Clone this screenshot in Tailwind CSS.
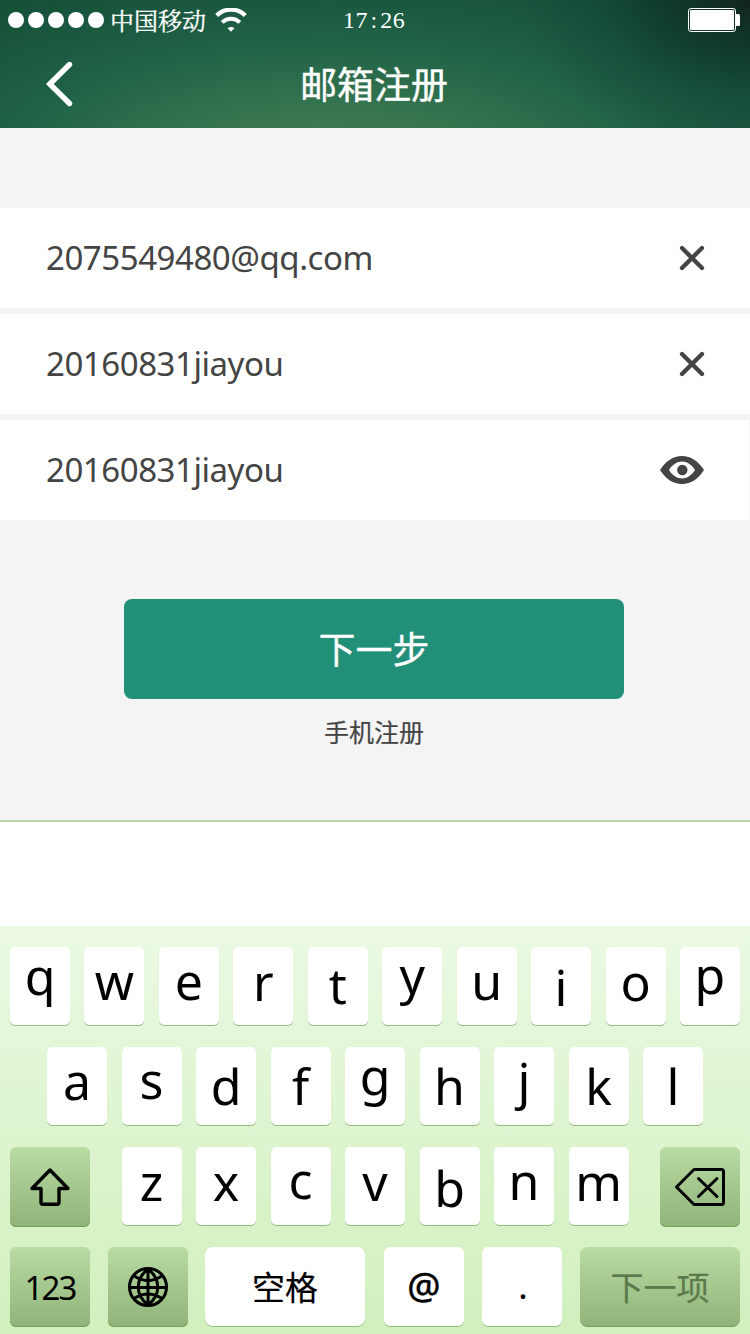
<!DOCTYPE html>
<html lang="zh-CN">
<head>
<meta charset="utf-8">
<title>邮箱注册</title>
<script src="https://cdn.jsdelivr.net/npm/@tailwindcss/browser@4"></script>
</head>
<body class="w-[750px] h-[1334px] overflow-hidden flex flex-col bg-[#f4f4f4] font-['Noto_Sans','Noto_Sans_CJK_SC',sans-serif]">

<header class="h-32 shrink-0 flex flex-col text-white bg-[radial-gradient(ellipse_230px_150px_at_750px_0px,#11251f_0%,#0d3127b0_35%,#0e3a2c50_65%,#0f3f2f00_100%),radial-gradient(ellipse_540px_205px_at_330px_165px,#44805a_0%,#34744f_30%,#1f6146_62%,#154f38_100%)]">
  <div class="h-10 grid grid-cols-[343px_1fr_auto] items-center pl-2 pr-[10px]">
    <div class="flex items-center">
      <div class="flex gap-1">
        <i class="size-4 rounded-full bg-white"></i><i class="size-4 rounded-full bg-white"></i><i class="size-4 rounded-full bg-white"></i><i class="size-4 rounded-full bg-white"></i><i class="size-4 rounded-full bg-white"></i>
      </div>
      <span class="ml-[6px] w-24 text-[24px] leading-[40px] whitespace-nowrap font-['Noto_Serif_CJK_SC','Noto_Sans_CJK_SC',serif] font-normal [-webkit-text-stroke:0.3px_white]">中国移动</span>
      <svg class="ml-[9px]" width="32" height="24" viewBox="0 0 32 24" fill="none" stroke="#fff">
        <path d="M1.700 7.400A20.500 20.500 0 0 1 30.300 7.400" stroke-width="4.200"/>
        <path d="M7.200 14.300A12.400 12.400 0 0 1 24.800 14.300" stroke-width="4"/>
        <path d="M12.600 20.200Q16 17.600 19.400 20.200L16 23.800Z" fill="#fff" stroke="none"/>
      </svg>
    </div>
    <span class="-ml-2 text-[24px] leading-[40px] tracking-[0.6px] font-['Liberation_Serif',serif]">17<span class="inline-block w-3 text-center">:</span>26</span>
    <svg width="52" height="24" viewBox="0 0 52 24" fill="none">
      <rect x=".5" y=".5" width="47" height="23" rx="2.5" stroke="#fff"/>
      <rect x="2" y="2" width="44" height="20" rx="1" fill="#fff"/>
      <path d="M48 6h2.500q1.500 0 1.500 1.500v9q0 1.500-1.500 1.500H48z" fill="#fff"/>
    </svg>
  </div>
  <div class="h-[88px] pr-[2px] grid grid-cols-[1fr_auto_1fr] items-center">
    <svg class="ml-[45px]" width="28" height="46" viewBox="0 0 28 46" fill="none" stroke="#fff" stroke-width="5.400" stroke-linecap="round" stroke-linejoin="miter"><path d="M24.500 3.500L4.800 23L24.500 42.500"/></svg>
    <h1 class="-mt-[2px] text-[37px] leading-[88px] font-normal [-webkit-text-stroke:0.4px_white] font-['Noto_Sans_CJK_SC',sans-serif]">邮箱注册</h1>
  </div>
</header>

<main class="h-[692px] shrink-0 pt-20 flex flex-col text-[#444]">
  <div class="flex flex-col gap-[6px] text-[33px] leading-[100px] tracking-[-0.45px]">
    <div class="h-[100px] bg-white flex items-center justify-between pl-[46px] pr-[45px]">
      <span>2075549480@qq.com</span>
      <svg width="26" height="26" viewBox="0 0 26 26" stroke="#444" stroke-width="4.300" stroke-linecap="round"><path d="M3 3L23 23M23 3L3 23"/></svg>
    </div>
    <div class="h-[100px] bg-white flex items-center justify-between pl-[46px] pr-[45px]">
      <span>20160831jiayou</span>
      <svg width="26" height="26" viewBox="0 0 26 26" stroke="#444" stroke-width="4.300" stroke-linecap="round"><path d="M3 3L23 23M23 3L3 23"/></svg>
    </div>
    <div class="h-[100px] mr-px bg-white flex items-center justify-between pl-[46px] pr-[45px]">
      <span>20160831jiayou</span>
      <svg width="44" height="28" viewBox="0 0 44 28"><path fill="#444" fill-rule="evenodd" d="M0 14C6 5 13 0 22 0S38 5 44 14C38 23 31 28 22 28S6 23 0 14ZM9 14C12.500 19.500 17 22.500 22 22.500S31.500 19.500 35 14C31.500 8.500 27 5.500 22 5.500S12.500 8.500 9 14Z"/><circle cx="22.300" cy="14" r="5.200" fill="#444"/></svg>
    </div>
  </div>
  <div class="mt-[79px] pr-[2px] flex flex-col items-center font-['Noto_Sans_CJK_SC',sans-serif]">
    <button class="w-[500px] h-[100px] pb-[2px] rounded-lg bg-[#229079] text-white text-[37px] leading-[98px] font-normal [-webkit-text-stroke:0.3px_white]">下一步</button>
    <a class="mt-[12px] text-[25px] leading-[40px] [-webkit-text-stroke:0.2px_#444]">手机注册</a>
  </div>
</main>

<div class="h-[106px] shrink-0 border-t-2 border-[#bbd8a8] bg-white"></div>

<section class="h-[408px] shrink-0 pt-[21px] flex flex-col gap-[21px] text-black bg-linear-to-b from-[#ebf9e3] to-[#d1f0bd]" id="keyboard">
  <div class="h-[79px] px-[10px] flex justify-between text-[50px] leading-[50px]" data-keys="q4 w9 e9 r10 t13 y3 u9 i15 o10 p3"></div>
  <div class="h-[79px] px-[47px] flex justify-between text-[50px] leading-[50px]" data-keys="a9 s8 d14 f14 g4 h14 j8 k14 l14"></div>
  <div class="h-[80px] px-[10px] flex justify-between">
    <div class="w-20 h-20 rounded-md flex items-center justify-center bg-linear-to-b from-[#b9dca4] to-[#8fb378] shadow-[inset_0_-1px_0_#72a054]">
      <svg width="40" height="38" viewBox="0 0 40 38" fill="none" stroke="#000" stroke-width="3.400" stroke-linejoin="round"><path d="M20 2L2 20.500H11V34.500Q11 36.200 12.700 36.200H27.300Q29 36.200 29 34.500V20.500H38Z"/></svg>
    </div>
    <div class="w-[507px] h-[79px] flex justify-between text-[50px] leading-[50px]" data-keys="z10 x10 c8 v10 b16 n9 m10"></div>
    <div class="w-20 h-20 rounded-md flex items-center justify-center bg-linear-to-b from-[#b9dca4] to-[#8fb378] shadow-[inset_0_-1px_0_#72a054]">
      <svg width="50" height="38" viewBox="0 0 50 38" fill="none" stroke="#000" stroke-width="3" stroke-linejoin="round" stroke-linecap="round"><path d="M19 1.500H46.500Q48.500 1.500 48.500 3.500V34.500Q48.500 36.500 46.500 36.500H19L1.500 19Z"/><path d="M23.500 10.500L42 28.500M42 10.500L23.500 28.500"/></svg>
    </div>
  </div>
  <div class="-mt-px h-20 px-[10px] grid grid-rows-[80px] grid-cols-[80px_80px_160px_80px_80px_160px] justify-between text-[33px] leading-[80px] text-center font-['Noto_Sans','Noto_Sans_CJK_SC',sans-serif]">
    <div class="rounded-md pt-px leading-[79px] tracking-[-1.800px] bg-linear-to-b from-[#b9dca4] to-[#8fb378] shadow-[inset_0_-1px_0_#72a054]">123</div>
    <div class="rounded-md flex items-center justify-center bg-linear-to-b from-[#b9dca4] to-[#8fb378] shadow-[inset_0_-1px_0_#72a054]">
      <svg width="40" height="40" viewBox="0 0 40 40" fill="none" stroke="#000" stroke-width="3"><circle cx="20" cy="20" r="18.500"/><path d="M20 1V39M1 20.500H39M20 2C7 12 7 28 20 38M20 2C33 12 33 28 20 38M6 9Q20 18 34 9M6 31.500Q20 22.500 34 31.500"/></svg>
    </div>
    <div class="-ml-px mr-px pt-[2px] leading-[78px] rounded-lg bg-white shadow-[inset_0_-1px_0_#93bd7a] [-webkit-text-stroke:0.2px_black]">空格</div>
    <div class="rounded-md bg-white shadow-[inset_0_-1px_0_#93bd7a] text-[37px] leading-[76px] [-webkit-text-stroke:0.5px_black]">@</div>
    <div class="rounded-md pl-[2px] bg-white shadow-[inset_0_-1px_0_#93bd7a] font-medium">.</div>
    <div class="rounded-lg pt-[2px] leading-[78px] text-[#5b7a4b] bg-linear-to-b from-[#b9dca4] to-[#8fb378] shadow-[inset_0_-1px_0_#72a054] [-webkit-text-stroke:0.2px_#5b7a4b]">下一项</div>
  </div>
</section>

<script>
  // Each entry is a letter followed by its distance from the top of the key.
  document.querySelectorAll('[data-keys]').forEach(row => {
    row.dataset.keys.split(' ').forEach(k => {
      const key = document.createElement('div');
      key.className = 'w-[60px] h-[79px] rounded-[5px] bg-white text-center shadow-[inset_0_-1px_0_#93bd7a]';
      key.style.paddingTop = k.slice(1) + 'px';
      key.textContent = k[0];
      row.append(key);
    });
  });
</script>
</body>
</html>
